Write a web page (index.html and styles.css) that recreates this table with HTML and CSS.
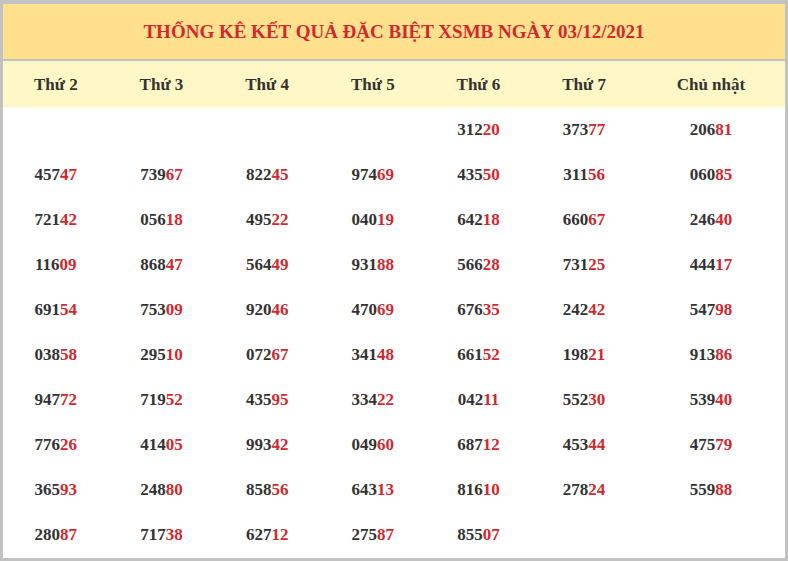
FILE: index.html
```html
<!DOCTYPE html>
<html lang="vi">
<head>
<meta charset="utf-8">
<title>Thống kê</title>
<link rel="stylesheet" href="styles.css">
</head>
<body>
<div class="board">
  <div class="title">THỐNG KÊ KẾT QUẢ ĐẶC BIỆT XSMB NGÀY 03/12/2021</div>
  <div class="grid" id="grid">
    <div class="head">Thứ 2</div>
    <div class="head">Thứ 3</div>
    <div class="head">Thứ 4</div>
    <div class="head">Thứ 5</div>
    <div class="head">Thứ 6</div>
    <div class="head">Thứ 7</div>
    <div class="head">Chủ nhật</div>

    <div class="cell"></div>
    <div class="cell"></div>
    <div class="cell"></div>
    <div class="cell"></div>
    <div class="cell">312<b>20</b></div>
    <div class="cell">373<b>77</b></div>
    <div class="cell">206<b>81</b></div>

    <div class="cell">457<b>47</b></div>
    <div class="cell">739<b>67</b></div>
    <div class="cell">822<b>45</b></div>
    <div class="cell">974<b>69</b></div>
    <div class="cell">435<b>50</b></div>
    <div class="cell">311<b>56</b></div>
    <div class="cell">060<b>85</b></div>

    <div class="cell">721<b>42</b></div>
    <div class="cell">056<b>18</b></div>
    <div class="cell">495<b>22</b></div>
    <div class="cell">040<b>19</b></div>
    <div class="cell">642<b>18</b></div>
    <div class="cell">660<b>67</b></div>
    <div class="cell">246<b>40</b></div>

    <div class="cell">116<b>09</b></div>
    <div class="cell">868<b>47</b></div>
    <div class="cell">564<b>49</b></div>
    <div class="cell">931<b>88</b></div>
    <div class="cell">566<b>28</b></div>
    <div class="cell">731<b>25</b></div>
    <div class="cell">444<b>17</b></div>

    <div class="cell">691<b>54</b></div>
    <div class="cell">753<b>09</b></div>
    <div class="cell">920<b>46</b></div>
    <div class="cell">470<b>69</b></div>
    <div class="cell">676<b>35</b></div>
    <div class="cell">242<b>42</b></div>
    <div class="cell">547<b>98</b></div>

    <div class="cell">038<b>58</b></div>
    <div class="cell">295<b>10</b></div>
    <div class="cell">072<b>67</b></div>
    <div class="cell">341<b>48</b></div>
    <div class="cell">661<b>52</b></div>
    <div class="cell">198<b>21</b></div>
    <div class="cell">913<b>86</b></div>

    <div class="cell">947<b>72</b></div>
    <div class="cell">719<b>52</b></div>
    <div class="cell">435<b>95</b></div>
    <div class="cell">334<b>22</b></div>
    <div class="cell">042<b>11</b></div>
    <div class="cell">552<b>30</b></div>
    <div class="cell">539<b>40</b></div>

    <div class="cell">776<b>26</b></div>
    <div class="cell">414<b>05</b></div>
    <div class="cell">993<b>42</b></div>
    <div class="cell">049<b>60</b></div>
    <div class="cell">687<b>12</b></div>
    <div class="cell">453<b>44</b></div>
    <div class="cell">475<b>79</b></div>

    <div class="cell">365<b>93</b></div>
    <div class="cell">248<b>80</b></div>
    <div class="cell">858<b>56</b></div>
    <div class="cell">643<b>13</b></div>
    <div class="cell">816<b>10</b></div>
    <div class="cell">278<b>24</b></div>
    <div class="cell">559<b>88</b></div>

    <div class="cell">280<b>87</b></div>
    <div class="cell">717<b>38</b></div>
    <div class="cell">627<b>12</b></div>
    <div class="cell">275<b>87</b></div>
    <div class="cell">855<b>07</b></div>
    <div class="cell"></div>
    <div class="cell"></div>
  </div>
</div>
</body>
</html>
```
FILE: styles.css
```css
* { box-sizing: border-box; }
html, body { margin: 0; padding: 0; background: #ffffff; }
body { font-family: "Liberation Serif", "Times New Roman", serif; font-weight: bold; }
.board {
  width: 788px;
  height: 561px;
  border: 3px solid #c2c2c2;
  border-top-width: 4px;
  background: #ffffff;
}
.title {
  height: 57px;
  border-bottom: 2px solid #c2c2c2;
  background: #ffe08c;
  color: #d2282e;
  font-size: 19px;
  display: flex;
  align-items: center;
  justify-content: center;
  padding-top: 1px;
}
.grid {
  display: grid;
  grid-template-columns: repeat(6, 105.67px) 148px;
  grid-template-rows: 46px repeat(10, 45px);
}
.head {
  background: #fff8c6;
  color: #333333;
  font-size: 17px;
  display: flex;
  align-items: center;
  justify-content: center;
  padding-top: 1px;
}
.cell {
  color: #333333;
  font-size: 17px;
  display: flex;
  align-items: center;
  justify-content: center;
}
.cell b { color: #d2282e; }
```
